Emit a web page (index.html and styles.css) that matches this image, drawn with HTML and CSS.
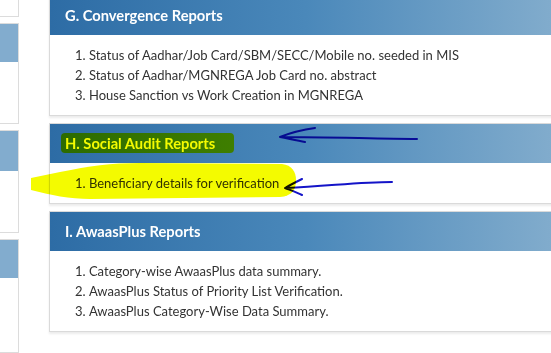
FILE: index.html
```html
<!DOCTYPE html>
<html>

<head>
	<title>Reports</title>
	<meta charset="UTF-8">
	<link rel="stylesheet" href="styles.css">
</head>

<body>
	<div class="page">
		<div class="side">
			<div class="side-card card-a"></div>
			<div class="side-card card-b"><div class="side-head"></div></div>
			<div class="side-card card-c"><div class="side-head head-c"></div></div>
			<div class="side-card card-d"><div class="side-head"></div></div>
		</div>

		<div class="main">
			<div class="panel">
				<header class="panel-head">G. Convergence Reports</header>
				<ol class="panel-list">
					<li>Status of Aadhar/Job Card/SBM/SECC/Mobile no. seeded in MIS</li>
					<li>Status of Aadhar/MGNREGA Job Card no. abstract</li>
					<li>House Sanction vs Work Creation in MGNREGA</li>
				</ol>
			</div>
			<div class="panel">
				<header class="panel-head">H. Social Audit Reports</header>
				<ol class="panel-list">
					<li>Beneficiary details for verification</li>
				</ol>
			</div>
			<div class="panel">
				<header class="panel-head">I. AwaasPlus Reports</header>
				<ol class="panel-list">
					<li>Category-wise AwaasPlus data summary.</li>
					<li>AwaasPlus Status of Priority List Verification.</li>
					<li>AwaasPlus Category-Wise Data Summary.</li>
				</ol>
			</div>
		</div>
	</div>

	<!-- hand-drawn marks on top of the screenshot -->
	<svg class="marks" width="551" height="353" viewBox="0 0 551 353">
		<rect class="hl" x="61" y="133" width="173" height="20" rx="4" />
		<path class="hl" d="M31 178 L60 172 C90 166 110 163 140 163 L282 164 C292 165 296 172 296 180 C296 190 292 196 280 197 L90 199 C70 199 50 195 31 190 Z" />
		<path class="pen" d="M417 139 C380 139 330 137 280 137 M315 128 C300 130 290 133 280 137 C290 139 298 141 305 142" />
		<path class="pen" d="M392 182 C360 182 330 186 286 188 M302 179 C296 182 290 185 285 188 C290 190 296 192 302 195" />
	</svg>
</body>

</html>
```

FILE: styles.css
```css
html,
body {
	margin: 0;
	padding: 0;
	background: #fff;
	overflow: hidden;
}

body {
	width: 551px;
	height: 353px;
	position: relative;
	font-family: Lato, "Liberation Sans", sans-serif;
}

.page {
	display: flex;
	gap: 30px;
	height: 353px;
	overflow: hidden;
}

.side {
	width: 19px;
	flex: none;
	display: flex;
	flex-direction: column;
	gap: 6px;
	margin-top: -10px;
}

.side-card {
	box-sizing: border-box;
	border: 1px solid #dcdcdc;
	border-left: none;
	background: #fff;
}

.card-a {
	height: 27px;
}

.card-b {
	height: 101px;
}

.card-c {
	height: 103px;
}

.card-d {
	flex: 1;
}

.side-head {
	height: 38px;
	background: #82acce;
}

.head-c {
	height: 40px;
}

.main {
	flex: 1;
	margin-right: -10px;
	margin-top: -5px;
	display: flex;
	flex-direction: column;
	gap: 7px;
}

.panel {
	border: 1px solid #dadada;
	background: #fff;
	box-shadow: 0 2px 2px rgba(0, 0, 0, 0.08);
}

.panel-head {
	height: 39px;
	line-height: 39px;
	padding-left: 15px;
	color: #fff;
	font-size: 14.7px;
	font-weight: bold;
	background: linear-gradient(to right, #2d6ca5, #4a88ba 50%, #83adcd);
}

.panel-list {
	margin: 0;
	padding: 10px 0 10px 25px;
	list-style: decimal inside;
	font-size: 13px;
	line-height: 20px;
	color: #333;
}

.marks {
	position: absolute;
	top: 0;
	left: 0;
	pointer-events: none;
}

.hl {
	fill: #f4fb00;
	mix-blend-mode: multiply;
}

.pen {
	fill: none;
	stroke: #1414c8;
	stroke-width: 2;
	stroke-linecap: round;
	stroke-linejoin: round;
	mix-blend-mode: multiply;
}
```
